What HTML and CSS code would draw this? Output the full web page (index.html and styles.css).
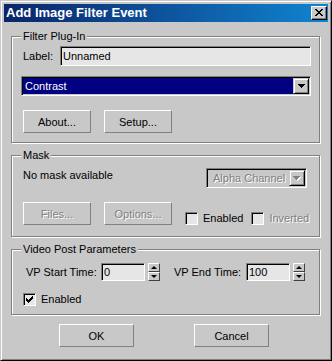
FILE: index.html
```html
<!DOCTYPE html>
<html lang="en">
<head>
  <meta charset="UTF-8" />
  <title>Add Image Filter Event</title>
  <meta name="viewport" content="width=device-width, initial-scale=1" />
  <link rel="stylesheet" href="styles.css">
</head>
<body>
  <div class="window">
    <div class="titlebar">
      <span class="title">Add Image Filter Event</span>
      <button class="close" type="button" aria-label="Close">
        <svg width="8" height="7" viewBox="0 0 8 7" shape-rendering="crispEdges"><path d="M0 0h2v1H0zM6 0h2v1H6zM1 1h2v1H1zM5 1h2v1H5zM2 2h4v1H2zM3 3h2v1H3zM2 4h4v1H2zM1 5h2v1H1zM5 5h2v1H5zM0 6h2v1H0zM6 6h2v1H6z" fill="#000"/></svg>
      </button>
    </div>

    <div class="content">
      <fieldset class="group plugin">
        <legend>Filter Plug-In</legend>
        <div class="label-row">
          <label for="event-label">Label:</label>
          <input class="field" id="event-label" type="text" value="Unnamed" />
        </div>
        <div class="combo active">
          <span class="combo-value">Contrast</span>
          <span class="combo-arrow">
            <svg width="7" height="4" viewBox="0 0 7 4" shape-rendering="crispEdges"><path d="M0 0h7v1H0zM1 1h5v1H1zM2 2h3v1H2zM3 3h1v1H3z" fill="#000"/></svg>
          </span>
        </div>
        <div class="btn-row">
          <button class="btn" type="button">About...</button>
          <button class="btn" type="button">Setup...</button>
        </div>
      </fieldset>

      <fieldset class="group mask">
        <legend>Mask</legend>
        <div class="mask-top">
          <span class="note">No mask available</span>
          <div class="combo disabled">
            <span class="combo-value">Alpha Channel</span>
            <span class="combo-arrow">
              <svg width="8" height="5" viewBox="0 0 8 5" shape-rendering="crispEdges"><path d="M1 1h7v1H1zM2 2h5v1H2zM3 3h3v1H3zM4 4h1v1H4z" fill="#fff"/><path d="M0 0h7v1H0zM1 1h5v1H1zM2 2h3v1H2zM3 3h1v1H3z" fill="#808080"/></svg>
            </span>
          </div>
        </div>
        <div class="btn-row">
          <button class="btn" type="button" disabled>Files...</button>
          <button class="btn" type="button" disabled>Options...</button>
          <label class="check mask-enabled"><span class="box"></span>Enabled</label>
          <label class="check disabled"><span class="box"></span>Inverted</label>
        </div>
      </fieldset>

      <fieldset class="group vp">
        <legend>Video Post Parameters</legend>
        <div class="spin-row">
          <label class="spin-label start">VP Start Time:</label>
          <input class="field num" type="text" value="0" />
          <span class="spin"><span class="up"></span><span class="down"></span></span>
          <label class="spin-label end">VP End Time:</label>
          <input class="field num" type="text" value="100" />
          <span class="spin"><span class="up"></span><span class="down"></span></span>
        </div>
        <label class="check vp-enabled">
          <span class="box">
            <svg width="7" height="7" viewBox="0 0 7 7" shape-rendering="crispEdges"><path d="M6 0h1v1H6zM5 1h2v1H5zM0 2h1v1H0zM4 2h3v1H4zM0 3h2v1H0zM3 3h3v1H3zM0 4h5v1H0zM1 5h3v1H1zM2 6h1v1H2z" fill="#000"/></svg>
          </span>Enabled
        </label>
      </fieldset>

      <div class="actions">
        <button class="btn wide" type="button">OK</button>
        <button class="btn wide" type="button">Cancel</button>
      </div>
    </div>
  </div>
</body>
</html>
```

FILE: styles.css
```css
body {
  margin: 0;
  font-family: "Liberation Sans", Arial, sans-serif;
  font-size: 11px;
  color: #000;
  background: #c8c8c8;
}
.window {
  width: 332px;
  height: 361px;
  box-sizing: border-box;
  background: #c8c8c8;
  border: 1px solid;
  border-color: #c8c8c8 #000 #000 #c8c8c8;
  box-shadow: inset 1px 1px 0 #fff, inset -1px -1px 0 #808080;
  padding: 3px;
}
.titlebar {
  height: 18px;
  display: flex;
  align-items: center;
  justify-content: space-between;
  padding: 0 1px 0 2px;
  background: linear-gradient(to right, #0a246a, #1084d0);
}
.title {
  color: #fff;
  font-weight: bold;
  font-size: 13px;
  line-height: 18px;
}
.close {
  width: 16px;
  height: 14px;
  box-sizing: border-box;
  margin: 0;
  padding: 0 0 1px 0;
  display: flex;
  align-items: center;
  justify-content: center;
  background: #c8c8c8;
  border: 1px solid;
  border-color: #fff #000 #000 #fff;
  box-shadow: inset -1px -1px 0 #808080;
}
.content {
  padding-top: 8px;
}

/* group boxes */
.group {
  margin: 0 8px 6px 7px;
  padding: 3px 8px 9px 9px;
  border: 1px solid #808080;
  box-shadow: inset 1px 1px 0 #fff, 1px 1px 0 #fff;
  min-width: 0;
}
.group legend {
  padding: 0 2px;
  line-height: 13px;
  background: #c8c8c8;
}
.mask {
  padding-top: 6px;
  padding-bottom: 11px;
}
.vp {
  padding-top: 7px;
  padding-bottom: 8px;
  margin-bottom: 9px;
}

/* fields */
.field {
  box-sizing: border-box;
  height: 20px;
  margin: 0;
  padding: 0 0 0 2px;
  font: inherit;
  color: #000;
  background: #e6e6e6;
  border: 1px solid;
  border-color: #808080 #fff #fff #808080;
  box-shadow: inset 1px 1px 0 #000;
  outline: none;
}
.label-row {
  display: flex;
  align-items: center;
  margin-left: 2px;
}
.label-row label {
  width: 37px;
}
.label-row .field {
  flex: 1;
  min-width: 0;
}

.combo {
  box-sizing: border-box;
  height: 20px;
  display: flex;
  padding: 1px;
  border: 1px solid;
  border-color: #808080 #fff #fff #808080;
  box-shadow: inset 1px 1px 0 #000;
}
.combo-value {
  flex: 1;
  padding-left: 2px;
  line-height: 16px;
  white-space: nowrap;
}
.combo-arrow {
  width: 16px;
  height: 16px;
  box-sizing: border-box;
  display: flex;
  align-items: center;
  justify-content: center;
  border: 1px solid;
  border-color: #c8c8c8 #000 #000 #c8c8c8;
  box-shadow: inset 1px 1px 0 #fff, inset -1px -1px 0 #808080;
  background: #c8c8c8;
}
.combo.active {
  margin-top: 10px;
}
.combo.active .combo-value {
  background: #000080;
  color: #fff;
}
.combo.disabled {
  width: 101px;
  margin-right: 4px;
}
.combo.disabled .combo-value {
  padding-left: 5px;
}
.combo.disabled .combo-value,
.btn:disabled,
.check.disabled {
  color: #808080;
  text-shadow: 1px 1px 0 #fff;
}

/* buttons */
.btn-row {
  display: flex;
  align-items: flex-end;
  gap: 13px;
  margin: 14px 0 0 2px;
}
.btn {
  flex-shrink: 0;
  width: 68px;
  height: 23px;
  box-sizing: border-box;
  margin: 0;
  padding: 0;
  font: inherit;
  color: #000;
  background: #c8c8c8;
  border: 1px solid;
  border-color: #fff #808080 #808080 #fff;
}
.btn.wide {
  width: 75px;
}
.actions {
  display: flex;
  gap: 60px;
  padding-left: 55px;
}

/* mask */
.mask-top {
  display: flex;
  justify-content: space-between;
  align-items: flex-start;
  margin-left: 2px;
}
.note {
  margin-top: 1px;
  line-height: 13px;
}

/* checkboxes */
.check {
  display: flex;
  align-items: center;
  gap: 5px;
  line-height: 13px;
  white-space: nowrap;
}
.box {
  width: 13px;
  height: 13px;
  box-sizing: border-box;
  flex-shrink: 0;
  display: flex;
  align-items: center;
  justify-content: center;
  background: #e6e6e6;
  border: 1px solid;
  border-color: #808080 #fff #fff #808080;
  box-shadow: inset 1px 1px 0 #000;
}
.check.disabled {
  margin-left: -5px;
}
.vp-enabled {
  margin: 12px 0 0 2px;
}

/* video post spinners */
.spin-row {
  display: flex;
  align-items: center;
  padding-left: 5px;
  white-space: nowrap;
}
.spin-label.start {
  width: 75px;
}
.spin-label.end {
  width: 72px;
  margin-left: 14px;
}
.field.num {
  width: 44px;
  height: 18px;
}
.spin {
  width: 12px;
  height: 18px;
  margin-left: 3px;
  display: flex;
  flex-direction: column;
}
.spin span {
  flex: 1;
  box-sizing: border-box;
  border: 1px solid;
  border-color: #fff #404040 #404040 #fff;
  background: #c8c8c8;
  position: relative;
}
.spin span::after {
  content: "";
  position: absolute;
  left: 2px;
  border-left: 3px solid transparent;
  border-right: 3px solid transparent;
}
.spin .up::after {
  top: 2px;
  border-bottom: 3px solid #000;
}
.spin .down::after {
  top: 2px;
  border-top: 3px solid #000;
}
```
